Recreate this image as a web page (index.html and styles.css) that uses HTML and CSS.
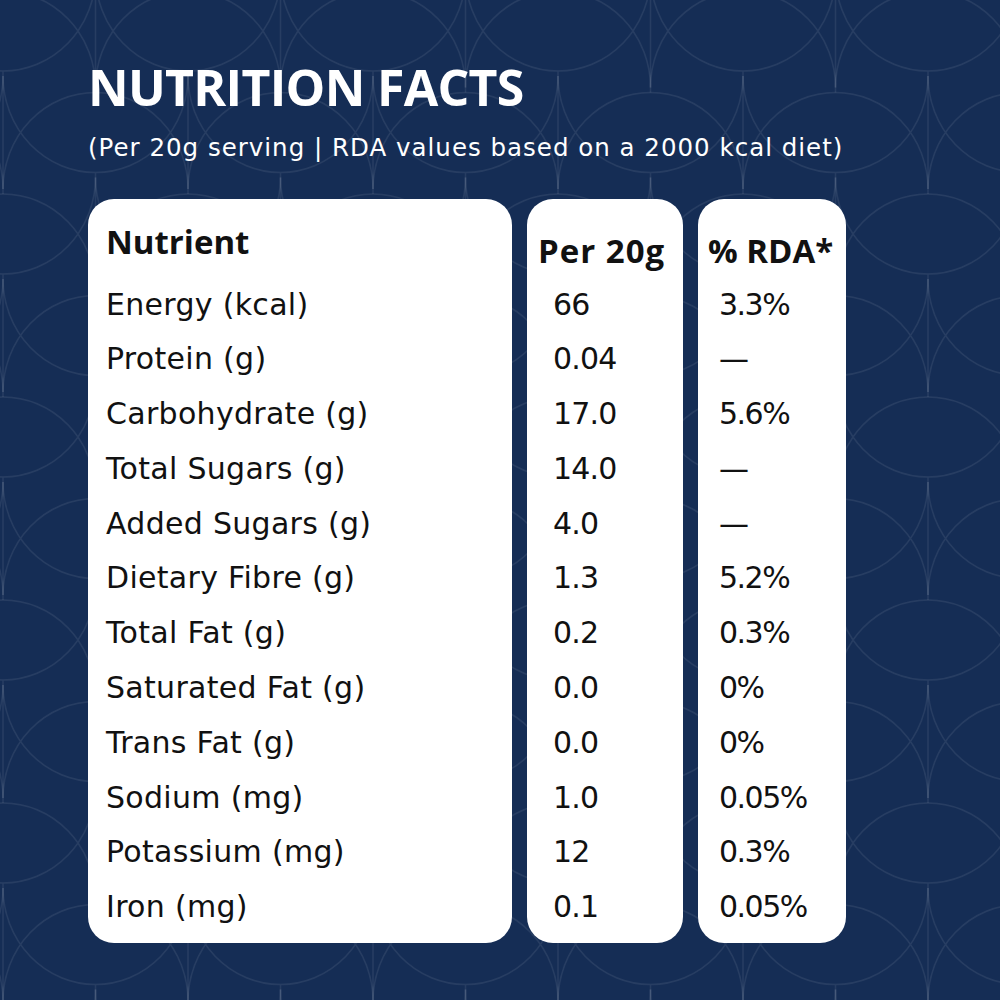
FILE: index.html
```html
<!DOCTYPE html>
<html lang="en">
<head>
<meta charset="utf-8">
<title>Nutrition Facts</title>
<link rel="stylesheet" href="styles.css">
</head>
<body>
<main class="panel">
  <h1 class="title">NUTRITION FACTS</h1>
  <p class="subtitle">(Per 20g serving | RDA values based on a 2000 kcal diet)</p>
  <div class="cards">
    <div class="card card-nutrient">
      <div class="head head-nutrient">Nutrient</div>
      <div class="cell">Energy (kcal)</div>
      <div class="cell">Protein (g)</div>
      <div class="cell">Carbohydrate (g)</div>
      <div class="cell">Total Sugars (g)</div>
      <div class="cell">Added Sugars (g)</div>
      <div class="cell">Dietary Fibre (g)</div>
      <div class="cell">Total Fat (g)</div>
      <div class="cell">Saturated Fat (g)</div>
      <div class="cell">Trans Fat (g)</div>
      <div class="cell">Sodium (mg)</div>
      <div class="cell">Potassium (mg)</div>
      <div class="cell">Iron (mg)</div>
    </div>
    <div class="card card-amount">
      <div class="head head-col">Per 20g</div>
      <div class="cell">66</div>
      <div class="cell">0.04</div>
      <div class="cell">17.0</div>
      <div class="cell">14.0</div>
      <div class="cell">4.0</div>
      <div class="cell">1.3</div>
      <div class="cell">0.2</div>
      <div class="cell">0.0</div>
      <div class="cell">0.0</div>
      <div class="cell">1.0</div>
      <div class="cell">12</div>
      <div class="cell">0.1</div>
    </div>
    <div class="card card-rda">
      <div class="head head-col">% RDA*</div>
      <div class="cell">3.3%</div>
      <div class="cell">—</div>
      <div class="cell">5.6%</div>
      <div class="cell">—</div>
      <div class="cell">—</div>
      <div class="cell">5.2%</div>
      <div class="cell">0.3%</div>
      <div class="cell">0%</div>
      <div class="cell">0%</div>
      <div class="cell">0.05%</div>
      <div class="cell">0.3%</div>
      <div class="cell">0.05%</div>
    </div>
  </div>
</main>
</body>
</html>
```

FILE: styles.css
```css
html, body {
  margin: 0;
  padding: 0;
}

body {
  width: 1000px;
  height: 1000px;
  overflow: hidden;
  background-color: #152d55;
  background-image: url("data:image/svg+xml,%3Csvg xmlns='http://www.w3.org/2000/svg' width='185' height='203' viewBox='0 0 185 203'%3E%3Cg fill='none' stroke='%23ffffff' stroke-opacity='0.08' stroke-width='1.5'%3E%3Cpath d='M-92.5 -56.5 A92.5 96.5 0 0 0 92.5 -56.5 M-92.5 56.5 A92.5 96.5 0 0 1 92.5 56.5 M0 40 V163'/%3E%3Cpath d='M92.5 -56.5 A92.5 96.5 0 0 0 277.5 -56.5 M92.5 56.5 A92.5 96.5 0 0 1 277.5 56.5 M185 40 V163'/%3E%3Cpath d='M-92.5 146.5 A92.5 96.5 0 0 0 92.5 146.5 M-92.5 259.5 A92.5 96.5 0 0 1 92.5 259.5'/%3E%3Cpath d='M92.5 146.5 A92.5 96.5 0 0 0 277.5 146.5 M92.5 259.5 A92.5 96.5 0 0 1 277.5 259.5'/%3E%3Cpath d='M0 45 A92.5 96.5 0 0 0 185 45 M0 158 A92.5 96.5 0 0 1 185 158 M92.5 141.5 V264.5'/%3E%3Cpath d='M-185 45 A92.5 96.5 0 0 0 0 45 M-185 158 A92.5 96.5 0 0 1 0 158'/%3E%3Cpath d='M185 45 A92.5 96.5 0 0 0 370 45 M185 158 A92.5 96.5 0 0 1 370 158'/%3E%3Cpath d='M92.5 -61.5 V61.5'/%3E%3C/g%3E%3C/svg%3E");
  background-position: 3px 31px;
  background-repeat: repeat;
  font-family: "DejaVu Sans", "Open Sans", sans-serif;
  color: #111111;
}

.panel {
  box-sizing: border-box;
  width: 1000px;
  height: 1000px;
  padding: 57px 0 0 88px;
}

.title {
  margin: 0;
  font-family: "Open Sans", "DejaVu Sans", sans-serif;
  font-size: 50px;
  line-height: 60px;
  font-weight: 700;
  letter-spacing: -0.7px;
  color: #ffffff;
}

.subtitle {
  margin: 15px 0 0;
  font-size: 24.5px;
  line-height: 32px;
  font-weight: 400;
  letter-spacing: 1px;
  color: #ffffff;
}

.cards {
  display: flex;
  gap: 15px;
  margin-top: 35px;
}

.card {
  box-sizing: border-box;
  height: 744px;
  background: #ffffff;
  border-radius: 26px;
}

.card-nutrient {
  width: 424px;
  padding-left: 18px;
}

.card-amount {
  width: 156px;
  padding-left: 26px;
}

.card-rda {
  width: 148px;
  padding-left: 21px;
}

.head {
  box-sizing: border-box;
  height: 78.5px;
  font-family: "Open Sans", "DejaVu Sans", sans-serif;
  font-size: 33px;
  line-height: 40px;
  font-weight: 700;
  white-space: nowrap;
}

.head-nutrient {
  padding-top: 23px;
}

.head-col {
  padding-top: 32px;
}

.card-amount .head {
  margin-left: -15px;
  letter-spacing: 1px;
}

.card-rda .head {
  margin-left: -11px;
}

.cell {
  font-size: 30px;
  line-height: 54.8px;
  font-weight: 400;
  white-space: nowrap;
}

.card-nutrient .cell {
  letter-spacing: 0.3px;
}

.card-amount .cell {
  letter-spacing: -0.8px;
}

.card-rda .cell {
  letter-spacing: -1.5px;
}
```
